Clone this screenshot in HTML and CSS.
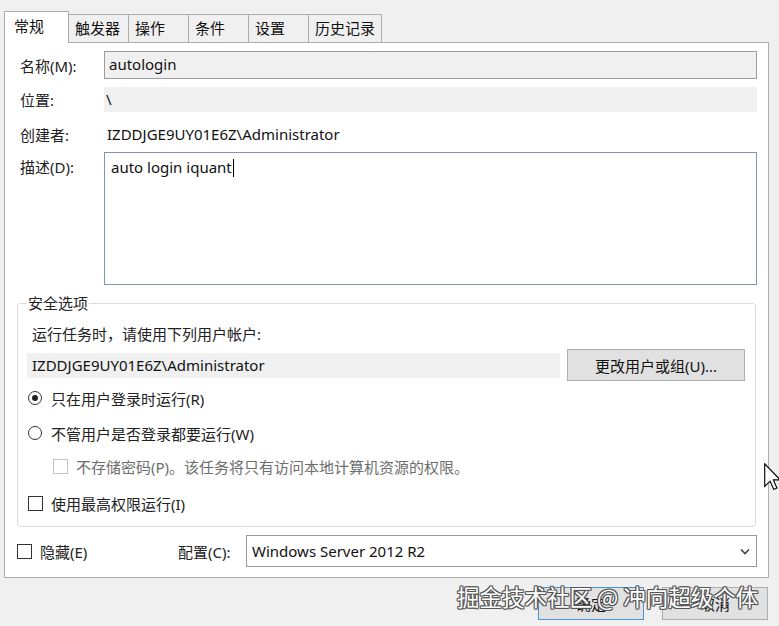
FILE: index.html
```html
<!DOCTYPE html>
<html lang="zh-CN">
<head>
<meta charset="utf-8">
<title>autologin 属性</title>
<link rel="stylesheet" href="styles.css">
</head>
<body>
<div class="window">
  <div class="tabs">
    <div class="tab active">常规</div>
    <div class="tab">触发器</div>
    <div class="tab">操作</div>
    <div class="tab">条件</div>
    <div class="tab">设置</div>
    <div class="tab">历史记录</div>
  </div>

  <div class="panel">
    <div class="row row-name">
      <span class="lbl">名称(M):</span>
      <div class="field field-edit">autologin</div>
    </div>
    <div class="row row-loc">
      <span class="lbl">位置:</span>
      <div class="field field-ro">\</div>
    </div>
    <div class="row row-author">
      <span class="lbl">创建者:</span>
      <div class="value">IZDDJGE9UY01E6Z\Administrator</div>
    </div>
    <div class="row row-desc">
      <span class="lbl">描述(D):</span>
      <div class="textarea">auto login iquant<span class="caret"></span></div>
    </div>

    <fieldset class="group">
      <legend>安全选项</legend>
      <div class="caption">运行任务时，请使用下列用户帐户:</div>
      <div class="user-row">
        <div class="field field-ro user-field">IZDDJGE9UY01E6Z\Administrator</div>
        <button class="btn btn-change">更改用户或组(U)...</button>
      </div>
      <div class="opt opt-r1"><span class="radio checked"></span>只在用户登录时运行(R)</div>
      <div class="opt opt-r2"><span class="radio"></span>不管用户是否登录都要运行(W)</div>
      <div class="opt opt-pw disabled"><span class="check"></span>不存储密码(P)。该任务将只有访问本地计算机资源的权限。</div>
      <div class="opt opt-hi"><span class="check"></span>使用最高权限运行(I)</div>
    </fieldset>

    <div class="bottom-row">
      <div class="opt"><span class="check"></span>隐藏(E)</div>
      <span class="cfg-lbl">配置(C):</span>
      <div class="select">
        <span>Windows Server 2012 R2</span>
        <svg class="chev" width="10" height="7" viewBox="0 0 10 7"><polyline points="1,1.5 5,5.5 9,1.5" fill="none" stroke="#444" stroke-width="1.6"/></svg>
      </div>
    </div>
  </div>

  <div class="footer">
    <button class="btn btn-default">确定</button>
    <button class="btn">取消</button>
  </div>

  <div class="watermark">掘金技术社区 @ 冲向超级个体</div>

  <svg class="cursor" width="17" height="27" viewBox="0 0 12 19">
    <path d="M0.5 0.5 L0.5 16.5 L4.3 12.8 L6.9 18.6 L9.1 17.6 L6.6 11.9 L11.5 11.9 Z" fill="#fff" stroke="#000" stroke-width="0.8" stroke-linejoin="miter"/>
  </svg>
</div>
</body>
</html>
```

FILE: styles.css
```css
* { box-sizing: border-box; }

html, body {
  margin: 0;
  width: 779px;
  height: 626px;
  overflow: hidden;
  background: #f0f0f0;
}

body {
  font-family: "Noto Sans", "Noto Sans CJK SC", sans-serif;
  font-size: 15px;
  color: #111;
}

.window {
  position: relative;
  height: 626px;
  padding: 11px 0 0 4px;
}

/* tab strip */
.tabs {
  position: relative;
  z-index: 1;
  display: flex;
  align-items: flex-end;
  height: 31px;
}

.tab {
  height: 28px;
  min-width: 61px;
  margin-left: -1px;
  padding: 0 6px;
  border: 1px solid #acacac;
  border-bottom: none;
  background: #f0f0f0;
  line-height: 27px;
  white-space: nowrap;
}

.tab.active {
  height: 32px;
  width: 65px;
  margin-left: 0;
  margin-bottom: -1px;
  padding-left: 9px;
  background: #fff;
  line-height: 29px;
}

.tab.active + .tab { margin-left: -1px; }

/* page body */
.panel {
  width: 765px;
  height: 536px;
  padding: 8px 11px 0 15px;
  border: 1px solid #adadad;
  background: #fff;
}

.row {
  display: flex;
  align-items: center;
}

.lbl {
  flex: none;
  width: 84px;
  color: #222;
}

.field {
  flex: 1;
  white-space: nowrap;
}

.field-edit {
  height: 28px;
  padding-left: 4px;
  border: 1px solid #9c9c9c;
  background: #f0f0f0;
  line-height: 25px;
}

.field-ro {
  height: 25px;
  padding-left: 2px;
  background: #f0f0f0;
  line-height: 24px;
}

.row-name { height: 28px; }
.row-loc { height: 25px; margin-top: 8px; }
.row-author { height: 24px; margin-top: 10px; }
.row-author .value { padding-left: 3px; }

.row-desc {
  align-items: flex-start;
  margin-top: 6px;
}

.row-desc .lbl {
  margin-top: 3px;
  line-height: 24px;
}

.textarea {
  flex: 1;
  height: 133px;
  padding: 2px 6px;
  border: 1px solid #7f98ad;
  line-height: 24px;
}

.caret {
  display: inline-block;
  width: 1px;
  height: 18px;
  margin-left: 1px;
  vertical-align: -4px;
  background: #000;
}

/* security options group */
.group {
  min-width: 0;
  margin: 8px 1px 0 -3px;
  padding: 0 9px 11px 9px;
  border: 1px solid #dcdcdc;
  border-radius: 3px;
}

.group legend {
  padding: 0 1px;
  line-height: 20px;
  color: #222;
}

.caption {
  margin-top: 9px;
  padding-left: 5px;
  line-height: 24px;
  color: #222;
}

.user-row {
  display: flex;
  align-items: center;
  height: 32px;
  margin-top: 3px;
}

.user-field {
  flex: none;
  width: 533px;
  padding-left: 5px;
}

.btn {
  height: 33px;
  padding: 0;
  border: 1px solid #adadad;
  background: #e1e1e1;
  font: inherit;
  color: #111;
}

.btn-change {
  width: 178px;
  height: 32px;
  margin-left: 7px;
}

.opt {
  display: flex;
  align-items: center;
  height: 24px;
  white-space: nowrap;
  color: #222;
}

.opt-r1 { margin-top: 5px; padding-left: 1px; }
.opt-r2 { margin-top: 11px; padding-left: 1px; }
.opt-pw { margin-top: 9px; padding-left: 26px; }
.opt-hi { margin-top: 13px; padding-left: 1px; }

.radio {
  flex: none;
  position: relative;
  width: 14px;
  height: 14px;
  margin-right: 9px;
  border: 1px solid #333;
  border-radius: 50%;
  background: #fff;
}

.radio.checked::after {
  content: "";
  position: absolute;
  left: 3px;
  top: 3px;
  width: 6px;
  height: 6px;
  border-radius: 50%;
  background: #222;
}

.check {
  flex: none;
  width: 15px;
  height: 15px;
  margin-right: 8px;
  border: 1px solid #333;
  background: #fff;
}

.disabled { color: #6d6d6d; }
.disabled .check { border-color: #c4c4c4; }

/* hidden / configure row */
.bottom-row {
  display: grid;
  grid-template-columns: 161px 68px 1fr;
  align-items: center;
  height: 32px;
  margin-top: 8px;
  margin-left: -3px;
}

.cfg-lbl { color: #222; }

.select {
  display: flex;
  align-items: center;
  justify-content: space-between;
  height: 32px;
  padding: 0 6px 0 5px;
  border: 1px solid #999;
  background: #fff;
}

.chev { display: block; }

/* dialog buttons */
.footer {
  display: flex;
  justify-content: flex-end;
  gap: 18px;
  width: 765px;
  margin-top: 9px;
  padding-right: 1px;
}

.footer .btn { width: 106px; }

.btn-default { border-color: #4a93d6; }

.watermark {
  position: absolute;
  left: 457px;
  top: 581px;
  font-family: "Noto Sans CJK SC", sans-serif;
  font-size: 22.5px;
  line-height: 30px;
  color: #fff;
  white-space: nowrap;
  text-shadow:
    1px 0 0 #555, -1px 0 0 #555, 0 1px 0 #555, 0 -1px 0 #555,
    1px 1px 0 #555, -1px -1px 0 #555, 1px -1px 0 #555, -1px 1px 0 #555;
}

.cursor {
  position: absolute;
  left: 764px;
  top: 463px;
}
```
